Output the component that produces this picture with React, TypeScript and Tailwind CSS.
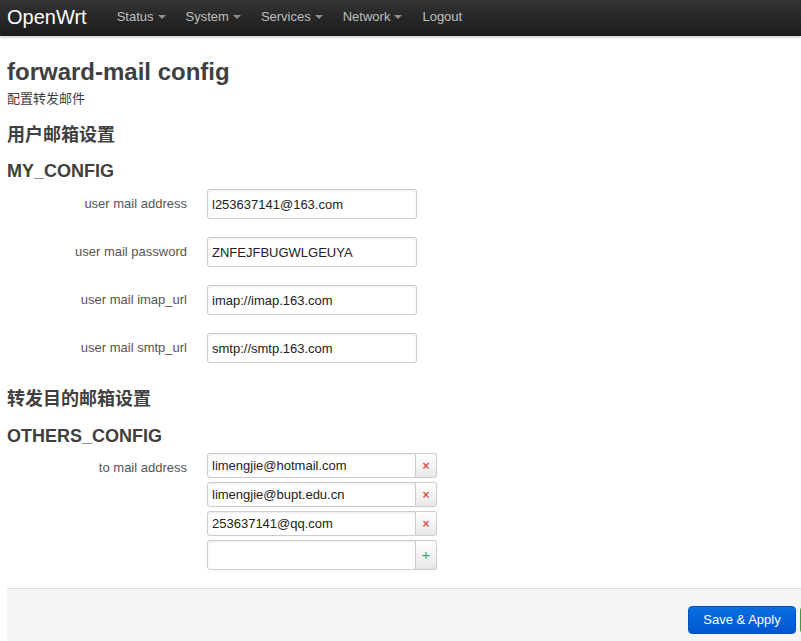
import React from "react";

const FONT = { fontFamily: '"Liberation Sans", "Noto Sans CJK SC", Arial, sans-serif' };

function Caret() {
  return (
    <span className="ml-[4px] inline-block h-0 w-0 border-x-[4px] border-t-[4px] border-x-transparent border-t-[#8f8f8f] align-middle" />
  );
}

function NavItem({ label, caret = true }: { label: string; caret?: boolean }) {
  return (
    <span className="flex items-center px-[10px] pb-[2px] text-[13px] text-[#bfbfbf]">
      {label}
      {caret && <Caret />}
    </span>
  );
}

function Field({ label, value }: { label: string; value: string }) {
  return (
    <div className="flex items-center mb-[18px]">
      <div className="w-[187px] text-right text-[13px] text-[#555]">{label}</div>
      <div className="ml-[20px] flex h-[30px] w-[210px] items-center rounded-[3px] border border-[#ccc] bg-white pl-[4px] pt-[1px] text-[13px] text-[#222] shadow-[inset_0_1px_2px_rgba(0,0,0,0.08)]">
        {value}
      </div>
    </div>
  );
}

function ListRow({ value, add = false }: { value: string; add?: boolean }) {
  return (
    <div className={`flex ${add ? "h-[30px]" : "h-[25px]"} w-[230px]`}>
      <div className="flex flex-1 items-center rounded-l-[3px] border border-[#ccc] bg-white pl-[4px] text-[13px] text-[#222] shadow-[inset_0_1px_2px_rgba(0,0,0,0.08)]">
        {value}
      </div>
      <div className="flex w-[21px] items-center justify-center rounded-r-[3px] border border-l-0 border-[#ccc] bg-gradient-to-b from-white to-[#e8e8e8] text-[13px] font-bold">
        {add ? (
          <span className="text-[#3aa57a] text-[15px] font-normal">+</span>
        ) : (
          <span className="text-[#d9534f] text-[12px]">×</span>
        )}
      </div>
    </div>
  );
}

export default function App() {
  return (
    <div className="h-[641px] w-[801px] overflow-hidden bg-white text-[#404040]" style={FONT}>
      {/* Navbar */}
      <div className="flex h-[36px] items-center bg-gradient-to-b from-[#333] to-[#1c1c1c] shadow-[0_1px_3px_rgba(0,0,0,0.25)]">
        <span className="pl-[7px] pr-[20px] pb-[2px] text-[20px] leading-[34px] text-white">OpenWrt</span>
        <NavItem label="Status" />
        <NavItem label="System" />
        <NavItem label="Services" />
        <NavItem label="Network" />
        <NavItem label="Logout" caret={false} />
      </div>

      <div className="pl-[7px]">
        <h1 className="mt-[18px] text-[24px] font-bold leading-[36px] text-[#404040]">forward-mail config</h1>
        <div className="text-[13px] leading-[18px] text-[#404040]">配置转发邮件</div>

        <h2 className="mt-[15px] text-[18px] font-bold leading-[24px] text-[#404040]">用户邮箱设置</h2>
        <h3 className="mt-[12px] text-[18px] font-bold leading-[24px] text-[#404040]">MY_CONFIG</h3>
      </div>

      <div className="mt-[6px]">
        <Field label="user mail address" value="l253637141@163.com" />
        <Field label="user mail password" value="ZNFEJFBUGWLGEUYA" />
        <Field label="user mail imap_url" value="imap://imap.163.com" />
        <Field label="user mail smtp_url" value="smtp://smtp.163.com" />
      </div>

      <div className="pl-[7px]">
        <h2 className="mt-[24px] text-[18px] font-bold leading-[24px] text-[#404040]">转发目的邮箱设置</h2>
        <h3 className="mt-[13px] text-[18px] font-bold leading-[24px] text-[#404040]">OTHERS_CONFIG</h3>
      </div>

      <div className="mt-[5px] flex">
        <div className="w-[187px] pt-[5px] text-right text-[13px] text-[#555]">to mail address</div>
        <div className="ml-[20px] flex flex-col gap-[4px]">
          <ListRow value="limengjie@hotmail.com" />
          <ListRow value="limengjie@bupt.edu.cn" />
          <ListRow value="253637141@qq.com" />
          <ListRow value="" add />
        </div>
      </div>

      {/* Footer actions */}
      <div className="ml-[7px] mt-[18px] flex h-[80px] w-[931px] justify-end gap-[4px] border-t border-[#ddd] bg-[#f5f5f5] pr-[20px] pt-[17px]">
        <button className="h-[28px] w-[108px] rounded-[4px] border border-[#0050c0] bg-gradient-to-b from-[#0a6fe0] to-[#0056d2] text-[13px] text-white">
          Save &amp; Apply
        </button>
        <button className="h-[28px] w-[56px] rounded-[4px] border border-[#3b9a3b] bg-gradient-to-b from-[#62c462] to-[#46a546] text-[13px] text-white">
          Save
        </button>
        <button className="h-[28px] w-[58px] rounded-[4px] border border-[#b33] bg-gradient-to-b from-[#ee5f5b] to-[#c43c35] text-[13px] text-white">
          Reset
        </button>
      </div>
    </div>
  );
}
